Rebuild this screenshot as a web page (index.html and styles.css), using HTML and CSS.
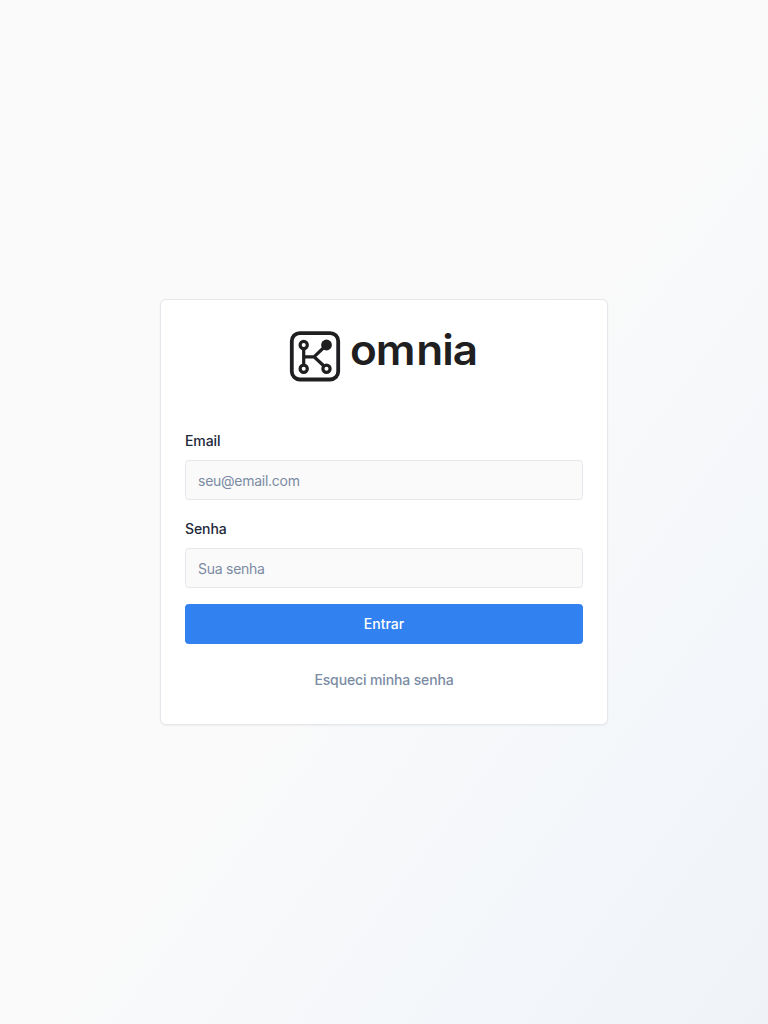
FILE: index.html
```html
<!DOCTYPE html>
<html lang="pt-BR">
<head>
<meta charset="utf-8">
<title>Omnia</title>
<link rel="stylesheet" href="styles.css">
</head>
<body>
<main class="page">
  <form class="card">
    <div class="brand">
      <svg class="mark" viewBox="0 0 52 52" fill="none" stroke="#1f1f21">
        <rect x="2.8" y="3.1" width="46.4" height="46.4" rx="8" stroke-width="3.8"/>
        <path d="M14.7 18v17M14.7 26.8h10.5M25 26.8L37.5 15M25 26.8L35.5 36.5" stroke-width="3.2"/>
        <circle cx="14.7" cy="15" r="3.6" stroke-width="3.2" fill="#fff"/>
        <circle cx="14.7" cy="38.8" r="3.6" stroke-width="3.2" fill="#fff"/>
        <circle cx="37.5" cy="38.8" r="3.6" stroke-width="3.2" fill="#fff"/>
        <circle cx="37.5" cy="15" r="5.4" fill="#1f1f21" stroke="none"/>
      </svg>
      <svg class="word" viewBox="0 0 130 52"><text transform="scale(1.05 1)" x="1 25.5 64 88.8 98.8" y="34.8">omnia</text></svg>
    </div>
    <label class="label" for="email">Email</label>
    <input class="input" id="email" type="email" placeholder="seu@email.com">
    <label class="label second" for="senha">Senha</label>
    <input class="input" id="senha" type="password" placeholder="Sua senha">
    <button class="submit" type="button">Entrar</button>
    <a class="forgot">Esqueci minha senha</a>
  </form>
</main>
</body>
</html>
```
FILE: styles.css
```css
* { box-sizing: border-box; }
body { margin: 0; font-family: Inter, sans-serif; font-size: 14px; line-height: 20px; }
.page { height: 1024px; display: flex; align-items: center; justify-content: center; background: linear-gradient(to bottom right, #fafafa 0%, #fafafa 50%, #f1f5fa 90%, #eff3f8 100%); }
.card { width: 448px; height: 426px; padding: 30px 24px 0; display: flex; flex-direction: column; background: #fff; border: 1px solid #e4e7eb; border-radius: 6px; box-shadow: 0 1px 2px rgba(0,0,0,.05); }
.brand { display: flex; height: 52px; margin: 0 0 49px 104px; gap: 8px; }
.mark { width: 52px; height: 52px; }
.word { width: 130px; height: 52px; overflow: visible; }
.word text { font: 600 42px Inter, sans-serif; fill: #1f1f21; }
.label { height: 20px; margin-bottom: 9px; font-weight: 500; letter-spacing: -.1px; color: #1d283a; }
.second { margin-top: 19px; }
.input { height: 40px; width: 100%; padding: 0 12px; font: 400 14px Inter, sans-serif; letter-spacing: -.26px; background: #fafafa; border: 1px solid #e4e7eb; border-radius: 4px; }
.input::placeholder { color: #7b8ba3; opacity: 1; }
.submit { height: 40px; margin-top: 16px; padding: 0 0 2px; border: 0; border-radius: 4px; background: #3182f0; color: #fff; font: 500 14px Inter, sans-serif; }
.forgot { margin-top: 26px; text-align: center; font-weight: 500; letter-spacing: -.13px; color: #7b8ba3; }
```
